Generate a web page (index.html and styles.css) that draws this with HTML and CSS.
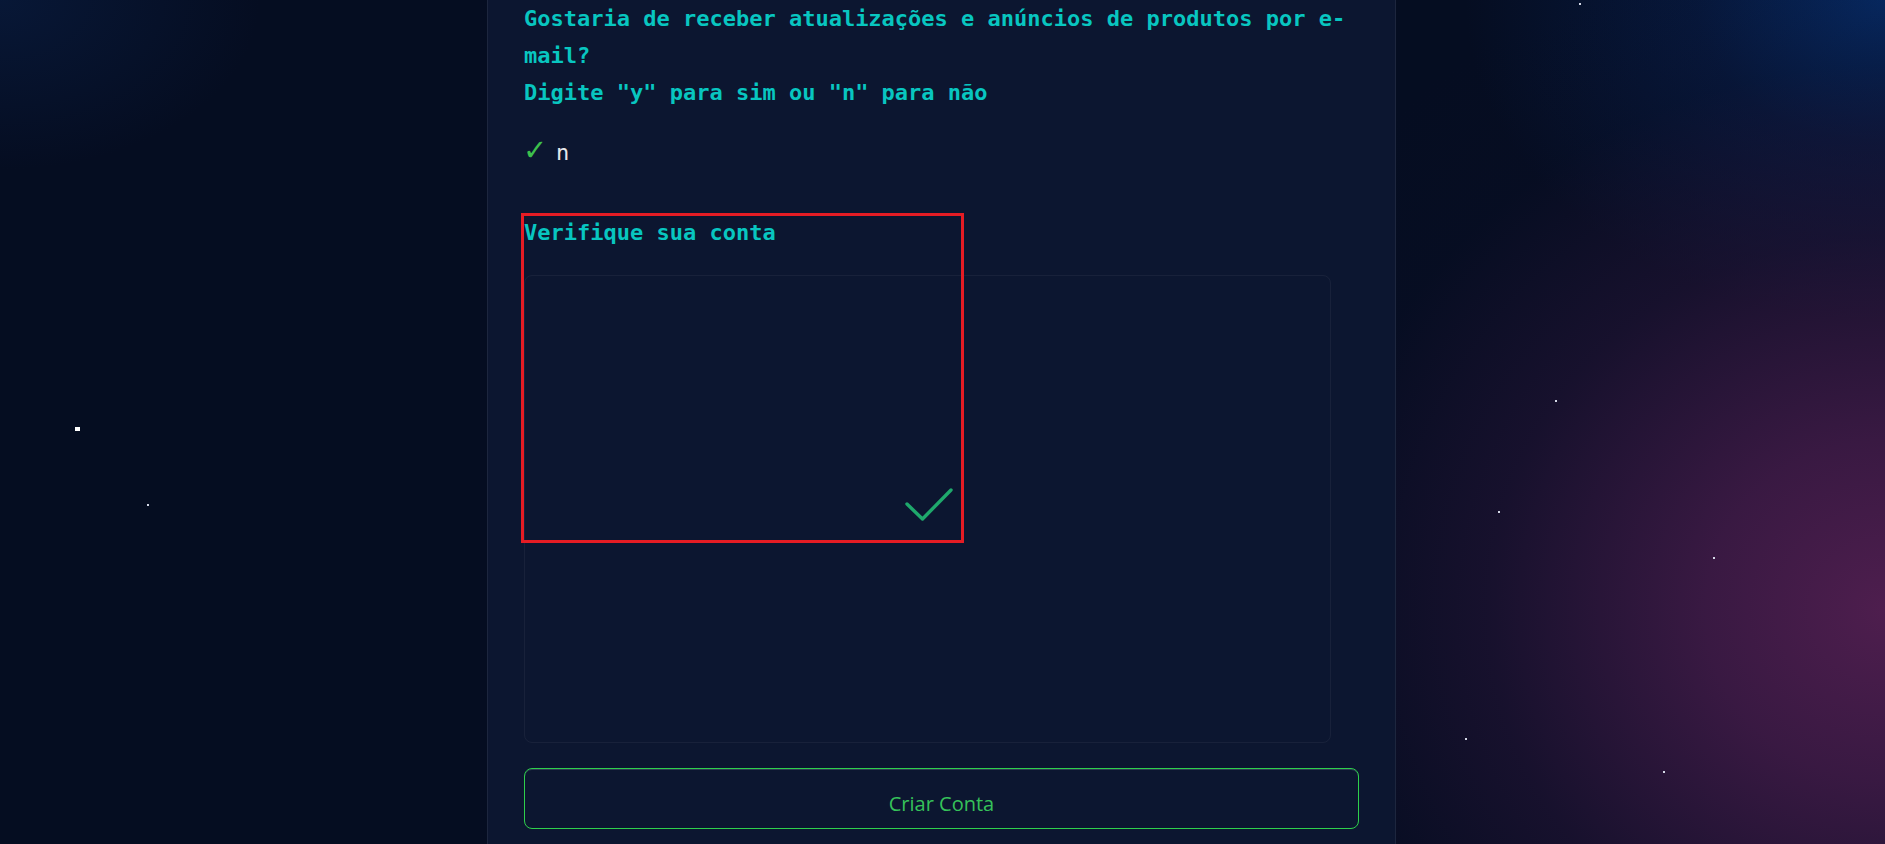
FILE: index.html
```html
<!DOCTYPE html>
<html lang="pt-BR">
<head>
<meta charset="utf-8">
<title>Criar Conta</title>
<link rel="stylesheet" href="styles.css">
</head>
<body>
  <div class="sky">
    <span class="star star-big s1"></span>
    <span class="star s2"></span>
    <span class="star s3"></span>
    <span class="star s4"></span>
    <span class="star s5"></span>
    <span class="star s6"></span>
    <span class="star s7"></span>
    <span class="star s8"></span>
  </div>

  <main class="panel">
    <p class="prompt">Gostaria de receber atualizações e anúncios de produtos por e-mail?<br>Digite "y" para sim ou "n" para não</p>
    <div class="answer"><span class="tick">✓</span><span class="answer-val">n</span></div>

    <h3 class="section-title">Verifique sua conta</h3>
    <div class="captcha">
      <svg class="captcha-check" width="48" height="34" viewBox="0 0 48 34" aria-hidden="true">
        <polyline points="2,16 17.5,31 46,2" fill="none" stroke="#1fa86c" stroke-width="3.4" stroke-linecap="round" stroke-linejoin="round"/>
      </svg>
    </div>

    <button class="btn-create" type="button">Criar Conta</button>
  </main>

  <div class="highlight"></div>
</body>
</html>
```

FILE: styles.css
```css
* {
  box-sizing: border-box;
}

html, body {
  margin: 0;
  padding: 0;
  height: 100%;
}

body {
  position: relative;
  overflow: hidden;
  background:
    radial-gradient(ellipse 720px 680px at 1885px 610px, rgba(78, 30, 78, 1) 0%, rgba(66, 27, 72, 0.85) 25%, rgba(38, 20, 55, 0.55) 55%, rgba(12, 14, 38, 0.2) 80%, rgba(5, 13, 33, 0) 100%),
    radial-gradient(ellipse 420px 320px at 1885px 0, rgba(6, 42, 100, 1) 0%, rgba(8, 34, 85, 0.5) 45%, rgba(5, 13, 33, 0) 100%),
    radial-gradient(ellipse 260px 170px at 0 0, rgba(10, 32, 72, 0.55) 0%, rgba(5, 13, 33, 0) 100%),
    #050d21;
  font-family: "DejaVu Sans Mono", "Liberation Mono", monospace;
}

/* stars on the backdrop */
.sky {
  position: absolute;
  inset: 0;
  pointer-events: none;
}

.star {
  position: absolute;
  width: 2px;
  height: 2px;
  background: #d4d8e6;
}

.star-big {
  width: 5px;
  height: 4px;
  background: #ffffff;
}

.s1 { left: 75px; top: 427px; }
.s2 { left: 147px; top: 504px; }
.s3 { left: 1579px; top: 3px; }
.s4 { left: 1555px; top: 400px; }
.s5 { left: 1498px; top: 511px; }
.s6 { left: 1713px; top: 557px; }
.s7 { left: 1465px; top: 738px; }
.s8 { left: 1663px; top: 771px; }

/* central panel */
.panel {
  position: relative;
  width: 909px;
  min-height: 100%;
  margin-left: calc(50% - 455.5px);
  padding: 0 36px;
  background: #0c1630;
  border-left: 1px solid rgba(255, 255, 255, 0.07);
  border-right: 1px solid rgba(255, 255, 255, 0.07);
  display: flex;
  flex-direction: column;
}

.prompt {
  margin: 0;
  font-size: 22px;
  line-height: 37px;
  font-weight: bold;
  color: #08c6c0;
}

.answer {
  margin-top: 21px;
  display: flex;
  align-items: baseline;
  gap: 13px;
  font-size: 22px;
  line-height: 37px;
}

.tick {
  font-family: "DejaVu Sans", sans-serif;
  font-size: 29px;
  font-weight: bold;
  line-height: 37px;
  color: #3cbf4c;
  width: 20px;
  margin-left: -1px;
}

.answer-val {
  color: #e6e8ec;
}

.section-title {
  margin: 43px 0 0;
  font-size: 22px;
  line-height: 37px;
  font-weight: bold;
  color: #08c6c0;
}

.captcha {
  margin-top: 24px;
  width: 807px;
  height: 468px;
  border: 1px solid rgba(255, 255, 255, 0.05);
  border-radius: 8px;
  display: flex;
  align-items: center;
  justify-content: center;
  padding-bottom: 8px;
}

.captcha-check {
  display: block;
  margin-left: 2px;
}

.btn-create {
  margin-top: 25px;
  width: 100%;
  height: 61px;
  padding: 21px 0 11px;
  background: transparent;
  border: 1px solid #2ecf4c;
  border-radius: 8px;
  box-shadow: inset 0 1px 0 rgba(148, 163, 184, 0.25);
  color: #36c25a;
  font-family: "Open Sans", "Noto Sans", sans-serif;
  font-size: 20px;
  line-height: 27px;
  text-align: center;
  cursor: pointer;
}

/* red annotation overlay */
.highlight {
  position: absolute;
  left: 521px;
  top: 213px;
  width: 443px;
  height: 330px;
  border: 3px solid #e51c24;
  pointer-events: none;
}
```
